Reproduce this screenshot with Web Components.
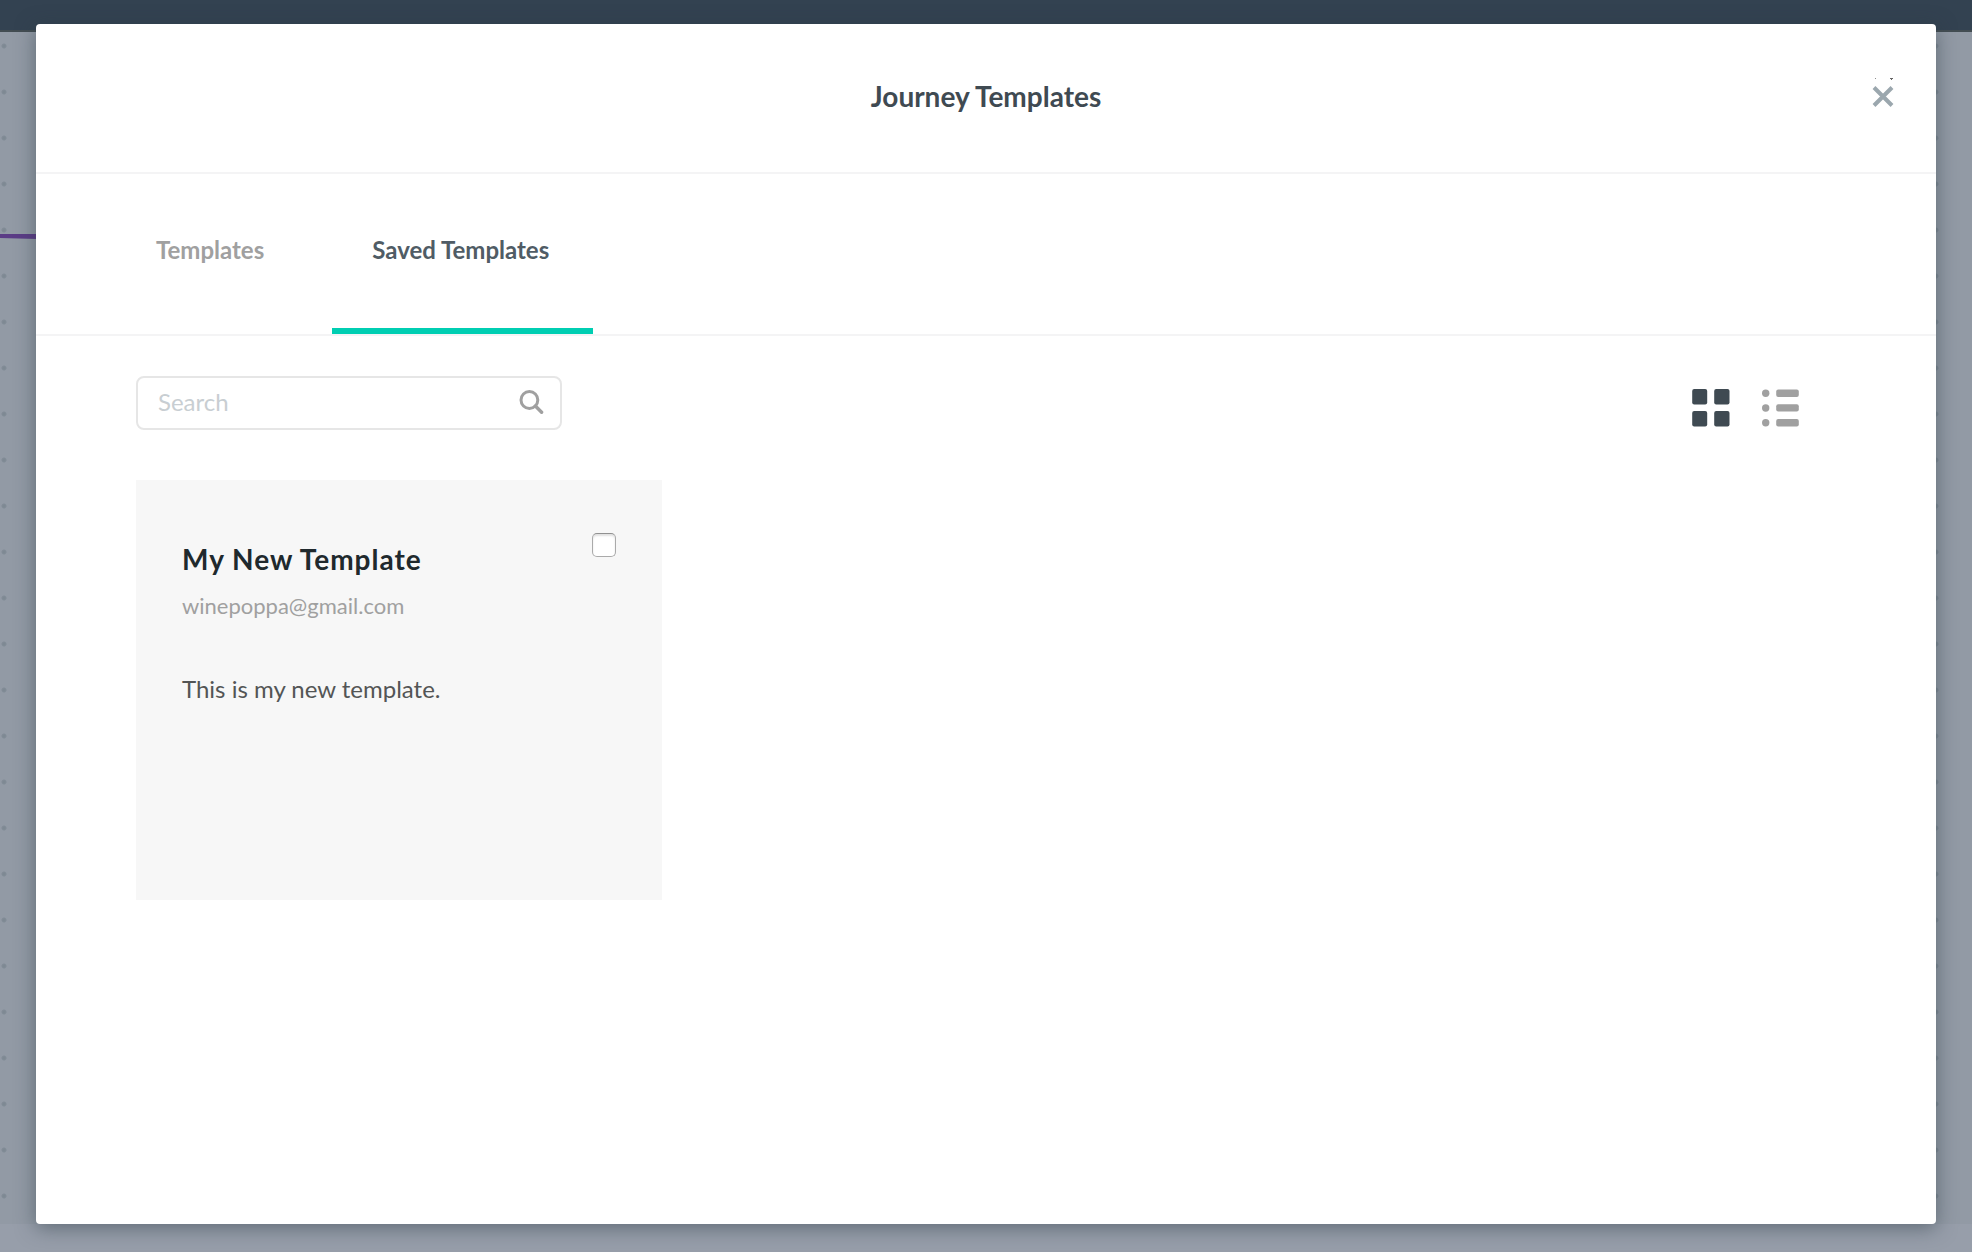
<!DOCTYPE html>
<html lang="en">
<head>
<meta charset="utf-8">
<title>Journey Templates</title>
<style>
  html, body { height: 100%; margin: 0; }
  body { font-family: Lato, "Open Sans", sans-serif; color: #3f4a52; }
</style>
</head>
<body>
<journey-screen>
  <journey-canvas></journey-canvas>
  <template-dialog heading="Journey Templates">
    <tab-bar slot="tabs">
      <tab-item>Templates</tab-item>
      <tab-item active>Saved Templates</tab-item>
    </tab-bar>
    <search-field></search-field>
    <view-switch></view-switch>
    <template-card slot="cards">
      <span slot="name">My New Template</span>
      <span slot="author">winepoppa@gmail.com</span>
      <span slot="description">This is my new template.</span>
    </template-card>
  </template-dialog>
</journey-screen>

<script>
const define = (name, html, setup) => {
  const template = document.createElement('template');
  template.innerHTML = html;
  customElements.define(name, class extends HTMLElement {
    connectedCallback() {
      if (this.shadowRoot) return;
      const root = this.attachShadow({ mode: 'open' });
      root.append(template.content.cloneNode(true));
      if (setup) setup(this, root);
    }
  });
};

/* The canvas and the dialog share one grid cell, the dialog on top. */
define('journey-screen', `
<style>
  :host { display: grid; grid-template: minmax(100vh, auto) / minmax(0, 1fr); }
  ::slotted(*) { grid-area: 1 / 1; }
</style>
<slot></slot>`);

define('journey-canvas', `
<style>
  :host { display: flex; flex-direction: column; background: #979eaa; }
  header { height: 30px; background: #334251; border-bottom: 2px solid #434d52; }
  main {
    flex: 1; padding-top: 202px; margin-bottom: 28px;
    background: radial-gradient(circle at 4px 14px, #7e8993 0 1px, #828c97 2px, #929aa5 3px) 0 0 / 1932px 46px;
  }
  svg { display: block; width: 100%; height: 5px; }
</style>
<header></header>
<main>
  <svg viewBox="0 0 100 5" preserveAspectRatio="none" aria-hidden="true"><path d="M0 0H1.9V5L0 4Z" fill="#5b3c86"/></svg>
</main>`);

define('template-dialog', `
<style>
  :host {
    display: flex; flex-direction: column; margin: 24px 36px 28px;
    background: #fff; border-radius: 4px; box-shadow: 0 4px 20px rgba(40, 55, 65, .5);
  }
  header {
    display: grid; grid-template-columns: 1fr auto 1fr;
    padding: 55px 40px 59px; border-bottom: 2px solid #f4f4f5;
  }
  h1 { grid-column: 2; margin: 0; font-size: 28px; line-height: 34px; font-weight: 700; }
  button { justify-self: end; align-self: center; padding: 0; border: 0; background: none; color: #9ba7ae; cursor: pointer; }
  svg { display: block; overflow: visible; }
  main { padding: 40px 100px; }
  .tools { display: flex; justify-content: space-between; }
  .cards { display: grid; grid-template-columns: repeat(auto-fill, 526px); gap: 50px; margin-top: 50px; }
</style>
<header>
  <h1></h1>
  <button type="button" aria-label="Close">
    <svg width="26" height="34" viewBox="0 0 26 34">
      <path d="M4 8.5 22 26.5M22 8.5 4 26.5" fill="none" stroke="currentColor" stroke-width="4"/>
      <path d="M5-1h1v1H5z" fill="#8d8d8d"/><path d="M20-1h3v1h-1v1h-1V0h-1z" fill="#666"/>
    </svg>
  </button>
</header>
<slot name="tabs"></slot>
<main>
  <div class="tools"><slot></slot></div>
  <div class="cards"><slot name="cards"></slot></div>
</main>`, (host, root) => {
  root.querySelector('h1').textContent = host.getAttribute('heading');
});

define('tab-bar', `
<style>
  :host { display: block; border-bottom: 2px solid #f4f4f5; }
  nav { display: flex; gap: 24px; padding: 0 80px; }
</style>
<nav><slot></slot></nav>`);

define('tab-item', `
<style>
  :host { display: block; color: #a0a0a0; }
  :host([active]) { color: #505c65; }
  button {
    display: block; padding: 61px 44px 63px 40px; border: 0; border-bottom: 6px solid transparent;
    background: none; color: inherit; font: 700 24px/30px Lato, sans-serif; cursor: pointer;
  }
  :host([active]) button { border-bottom-color: #00ceb2; }
</style>
<button type="button"><slot></slot></button>`);

define('search-field', `
<style>
  :host { display: block; width: 426px; }
  label {
    display: flex; align-items: center; height: 54px; box-sizing: border-box;
    padding: 0 16px 2px 20px; border: 2px solid #e6e6e6; border-radius: 8px;
  }
  input { flex: 1; min-width: 0; padding: 0; border: 0; outline: 0; background: none; font: 24px/30px Lato, sans-serif; color: #3f4a52; }
  input::placeholder { color: #c8ced2; opacity: 1; }
</style>
<label>
  <input type="text" placeholder="Search" aria-label="Search">
  <svg width="26" height="26" viewBox="0 0 26 26" fill="none" stroke="#a0a0a0" aria-hidden="true">
    <circle cx="11.4" cy="11" r="8.4" stroke-width="3"/><path d="M17.4 17 23.6 23.2" stroke-width="3.4" stroke-linecap="round"/>
  </svg>
</label>`);

define('view-switch', `
<style>
  :host { display: flex; gap: 32px; align-items: center; padding: 10px 36px 0 0; }
  button { padding: 0; border: 0; background: none; color: #a0a0a0; cursor: pointer; }
  button[aria-pressed=true] { color: #3f4a52; }
  svg { display: block; fill: currentColor; }
</style>
<button type="button" aria-label="Grid view" aria-pressed="true">
  <svg width="38" height="38" viewBox="0 0 38 38">
    <rect x=".2" width="15" height="15.5" rx="2"/><rect x="22.2" width="15.3" height="15.5" rx="2"/>
    <rect x=".2" y="22" width="15" height="15.5" rx="2"/><rect x="22.2" y="22" width="15.3" height="15.5" rx="2"/>
  </svg>
</button>
<button type="button" aria-label="List view" aria-pressed="false">
  <svg width="38" height="38" viewBox="0 0 38 38">
    <circle cx="3.7" cy="4.2" r="3.7"/><rect x="14.2" y=".5" width="22.6" height="7.4" rx="2"/>
    <circle cx="3.7" cy="19" r="3.7"/><rect x="14.2" y="15.2" width="22.6" height="7.4" rx="2"/>
    <circle cx="3.7" cy="33.8" r="3.7"/><rect x="14.2" y="30" width="22.6" height="7.4" rx="2"/>
  </svg>
</button>`);

define('template-card', `
<style>
  :host { display: block; min-height: 420px; background: #f7f7f7; }
  article { display: flex; justify-content: space-between; align-items: flex-start; padding: 53px 46px 0; }
  h2, p { margin: 0; }
  h2 { padding-top: 9px; font-size: 28px; line-height: 34px; letter-spacing: 1px; color: #20292d; }
  .author { margin-top: 16px; font-size: 22px; line-height: 28px; color: #a0a0a0; }
  .description { margin-top: 54px; font-size: 24px; line-height: 30px; color: #535555; }
  input {
    appearance: none; box-sizing: border-box; width: 24px; height: 24px; margin: 0;
    border: 1px solid #aaa; border-top-color: #919191;
    border-radius: 5px; background: #fff; box-shadow: inset 0 2px 2px #e2e2e2;
  }
  input:checked { background: #00ceb2; }
</style>
<article>
  <div>
    <h2><slot name="name"></slot></h2>
    <p class="author"><slot name="author"></slot></p>
    <p class="description"><slot name="description"></slot></p>
  </div>
  <input type="checkbox" aria-label="Select template">
</article>`);
</script>
</body>
</html>
